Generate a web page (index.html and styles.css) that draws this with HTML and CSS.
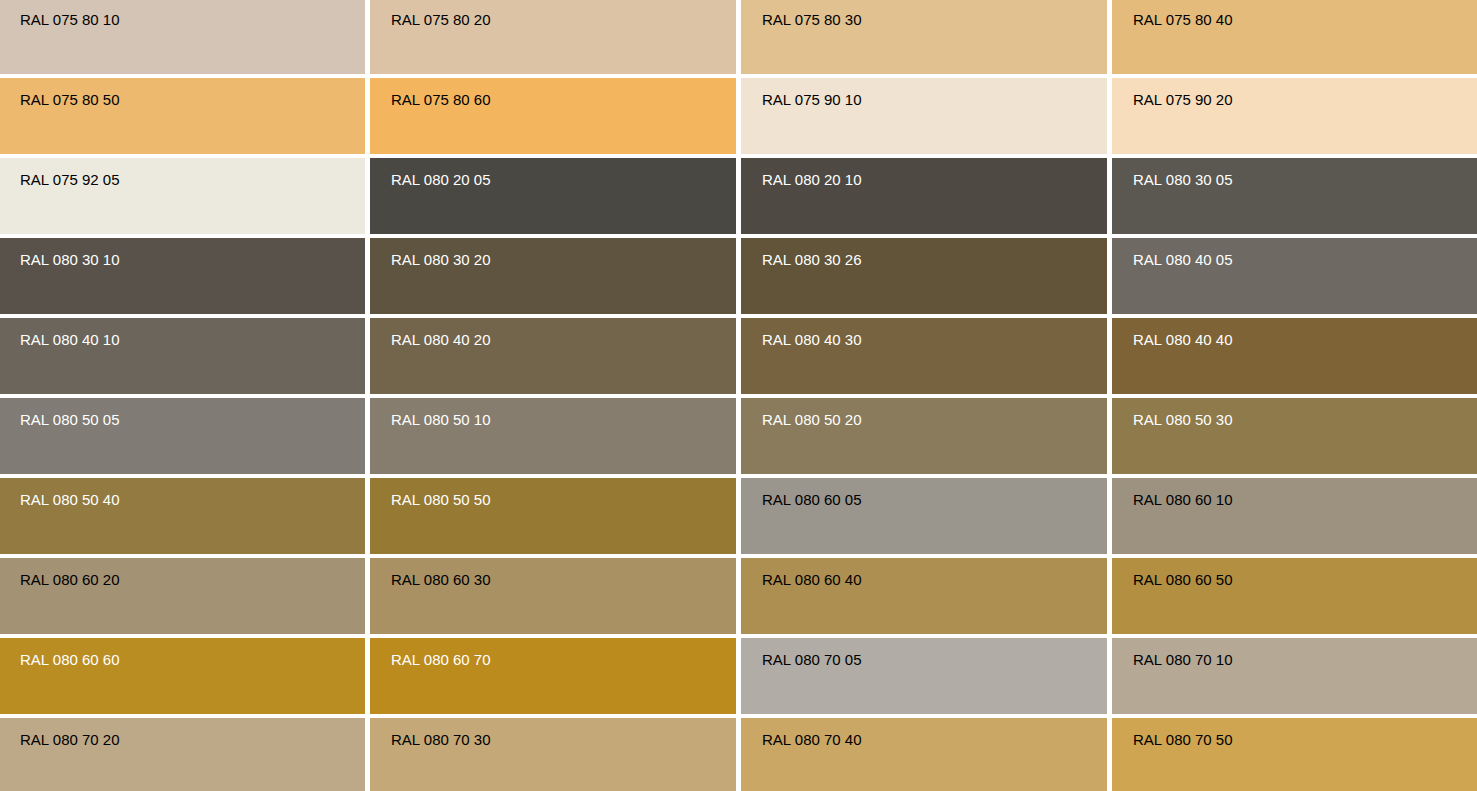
FILE: index.html
```html
<!DOCTYPE html>
<html>
<head>
<meta charset="utf-8">
<link rel="stylesheet" href="styles.css">
</head>
<body>
<div class="grid">
  <div class="tile dk" style="background:#D4C4B5">RAL 075 80 10</div>
  <div class="tile dk" style="background:#DDC3A5">RAL 075 80 20</div>
  <div class="tile dk" style="background:#E1C190">RAL 075 80 30</div>
  <div class="tile dk" style="background:#E5BB7C">RAL 075 80 40</div>

  <div class="tile dk" style="background:#ECB96E">RAL 075 80 50</div>
  <div class="tile dk" style="background:#F3B65E">RAL 075 80 60</div>
  <div class="tile dk" style="background:#F1E3D1">RAL 075 90 10</div>
  <div class="tile dk" style="background:#F7DDBC">RAL 075 90 20</div>

  <div class="tile dk" style="background:#ECEADF">RAL 075 92 05</div>
  <div class="tile lt" style="background:#4A4843">RAL 080 20 05</div>
  <div class="tile lt" style="background:#4E4A43">RAL 080 20 10</div>
  <div class="tile lt" style="background:#5B5751">RAL 080 30 05</div>

  <div class="tile lt" style="background:#58524A">RAL 080 30 10</div>
  <div class="tile lt" style="background:#5E5440">RAL 080 30 20</div>
  <div class="tile lt" style="background:#615439">RAL 080 30 26</div>
  <div class="tile lt" style="background:#6E6A63">RAL 080 40 05</div>

  <div class="tile lt" style="background:#6C655B">RAL 080 40 10</div>
  <div class="tile lt" style="background:#73654C">RAL 080 40 20</div>
  <div class="tile lt" style="background:#786340">RAL 080 40 30</div>
  <div class="tile lt" style="background:#7D6336">RAL 080 40 40</div>

  <div class="tile lt" style="background:#807B74">RAL 080 50 05</div>
  <div class="tile lt" style="background:#867D6E">RAL 080 50 10</div>
  <div class="tile lt" style="background:#8B7B5D">RAL 080 50 20</div>
  <div class="tile lt" style="background:#8E7A4B">RAL 080 50 30</div>

  <div class="tile lt" style="background:#927A40">RAL 080 50 40</div>
  <div class="tile lt" style="background:#967A33">RAL 080 50 50</div>
  <div class="tile dk" style="background:#9A958D">RAL 080 60 05</div>
  <div class="tile dk" style="background:#9D9280">RAL 080 60 10</div>

  <div class="tile dk" style="background:#A39273">RAL 080 60 20</div>
  <div class="tile dk" style="background:#A99164">RAL 080 60 30</div>
  <div class="tile dk" style="background:#AE8F52">RAL 080 60 40</div>
  <div class="tile dk" style="background:#B38F42">RAL 080 60 50</div>

  <div class="tile lt" style="background:#BA8D23">RAL 080 60 60</div>
  <div class="tile lt" style="background:#BC8B1D">RAL 080 60 70</div>
  <div class="tile dk" style="background:#B1ADA6">RAL 080 70 05</div>
  <div class="tile dk" style="background:#B5A996">RAL 080 70 10</div>

  <div class="tile dk" style="background:#BDA988">RAL 080 70 20</div>
  <div class="tile dk" style="background:#C4A877">RAL 080 70 30</div>
  <div class="tile dk" style="background:#CBA766">RAL 080 70 40</div>
  <div class="tile dk" style="background:#D0A551">RAL 080 70 50</div>
</div>
</body>
</html>
```
FILE: styles.css
```css
html, body {
  margin: 0;
  padding: 0;
  background: #ffffff;
  overflow: hidden;
}
.grid {
  display: grid;
  grid-template-columns: 365px 366px 366px 365px;
  column-gap: 5px;
  row-gap: 4px;
  margin-top: -2px;
}
.tile {
  height: 76px;
  box-sizing: border-box;
  padding: 13px 21px 0 21px;
  font-family: "Liberation Sans", Arial, sans-serif;
  font-size: 15px;
  line-height: 17px;
}
.tile:nth-child(4n+1) {
  padding-left: 20px;
}
.dk { color: #000000; }
.lt { color: #ffffff; }
```
